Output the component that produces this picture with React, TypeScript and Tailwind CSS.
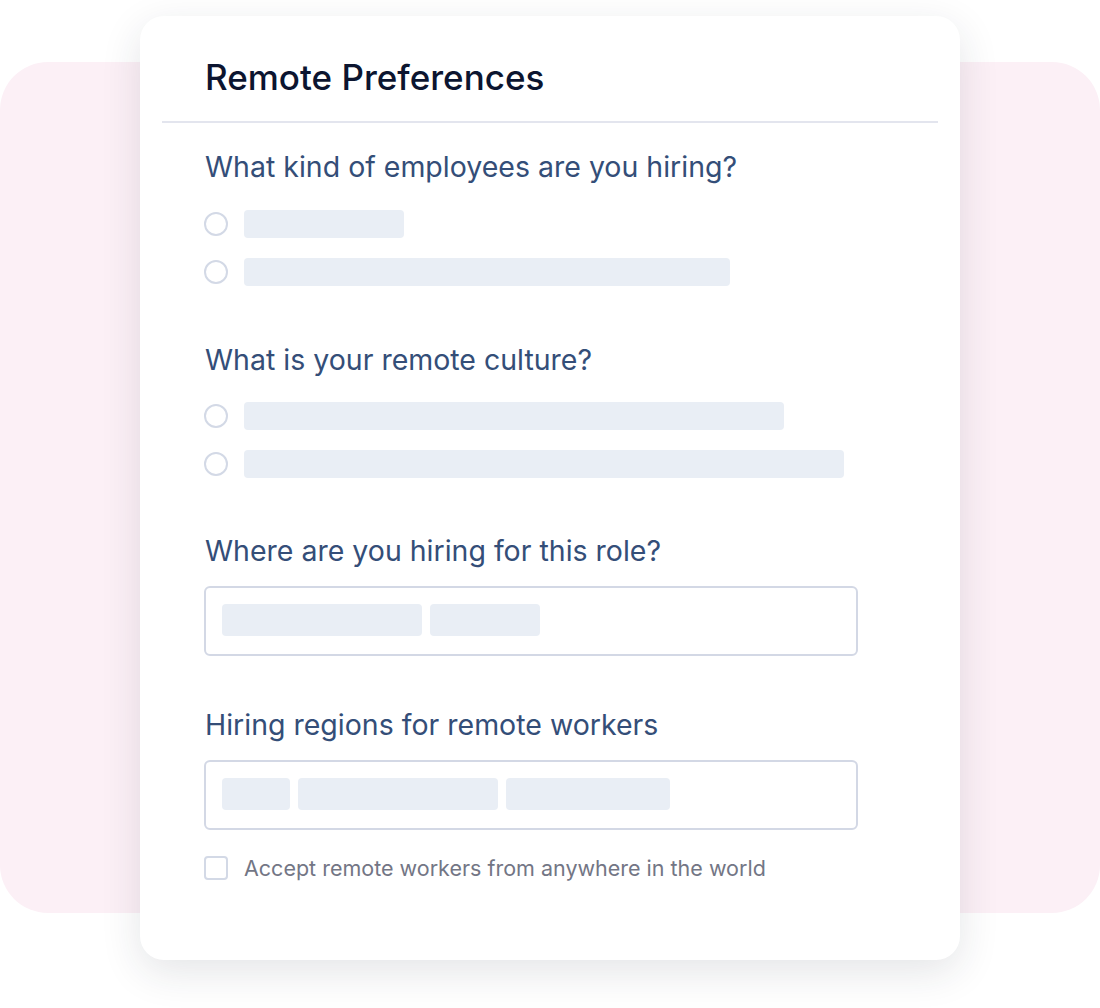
import React from "react";

const RadioRow: React.FC<{ width: number }> = ({ width }) => (
  <div className="flex items-center gap-4 h-7">
    <div className="w-6 h-6 rounded-full border-2 border-[#d3d9e6] bg-white" />
    <div className="h-7 rounded bg-[#e9eef5]" style={{ width }} />
  </div>
);

const ChipBox: React.FC<{ chips: number[] }> = ({ chips }) => (
  <div className="mt-[18px] w-[654px] h-[70px] border-2 border-[#d3d8e5] rounded-md px-4 py-4 flex gap-2">
    {chips.map((w, i) => (
      <div key={i} className="h-8 rounded bg-[#e9eef5]" style={{ width: w }} />
    ))}
  </div>
);

const Question: React.FC<{ text: string; className?: string }> = ({
  text,
  className,
}) => (
  <h3
    className={`pl-px text-[28.5px] leading-[34px] text-[#344e78] font-normal ${className ?? ""}`}
  >
    {text}
  </h3>
);

const App: React.FC = () => {
  return (
    <div className="w-[1100px] h-[1008px] bg-white overflow-hidden font-['Inter',sans-serif]">
      <div className="mt-[62px] h-[851px] rounded-[48px] bg-[#fcf0f6]">
        <div className="relative -top-[46px] mx-[140px] w-[820px] h-[944px] bg-white rounded-[24px] shadow-[0_12px_40px_rgba(30,41,59,0.12)] flex flex-col">
          <div className="pt-[41px] pl-[65px]">
            <h2 className="text-[35px] leading-[40px] font-medium text-[#0c1530]">
              Remote Preferences
            </h2>
          </div>
          <div className="mt-6 mx-[22px] h-[2px] bg-[#e3e5ee]" />

          <div className="pl-[64px] flex flex-col">
            <Question text="What kind of employees are you hiring?" className="mt-[27px]" />
            <div className="mt-[26px] flex flex-col gap-5">
              <RadioRow width={160} />
              <RadioRow width={486} />
            </div>

            <Question text="What is your remote culture?" className="mt-[57px]" />
            <div className="mt-[25px] flex flex-col gap-5">
              <RadioRow width={540} />
              <RadioRow width={600} />
            </div>

            <Question text="Where are you hiring for this role?" className="mt-[56px]" />
            <ChipBox chips={[200, 110]} />

            <Question text="Hiring regions for remote workers" className="mt-[52px]" />
            <ChipBox chips={[68, 200, 164]} />

            <div className="mt-[26px] flex items-center gap-4 h-6">
              <div className="w-6 h-6 rounded border-2 border-[#d3d9e6] bg-white" />
              <span className="text-[21.5px] leading-6 text-[#737685]">
                Accept remote workers from anywhere in the world
              </span>
            </div>
          </div>
        </div>
      </div>
    </div>
  );
};

export default App;
